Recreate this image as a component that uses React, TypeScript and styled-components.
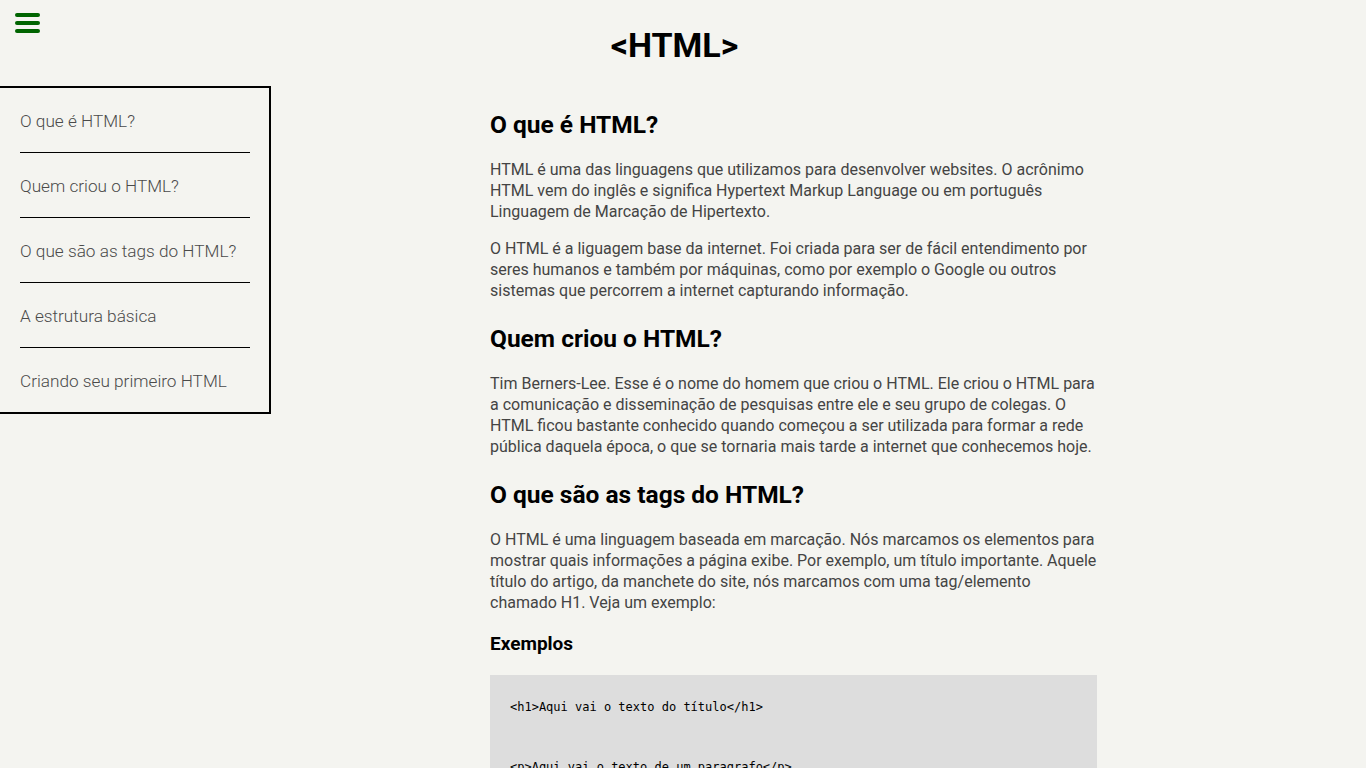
import React from "react";
import styled, { createGlobalStyle } from "styled-components";

const GlobalStyle = createGlobalStyle`
  html, body {
    margin: 0;
    padding: 0;
  }
  body {
    background: #f4f4f0;
    font-family: Roboto, "Open Sans", sans-serif;
    line-height: 1.33;
    color: #000;
  }
`;

const Header = styled.header`
  display: grid;
  grid-template-columns: 1fr auto 1fr;
  align-items: start;
  padding: 0 17px 20px 0;
`;

const MenuButton = styled.button`
  justify-self: start;
  display: flex;
  flex-direction: column;
  gap: 4px;
  background: none;
  border: 0;
  padding: 13px 15px;
  margin: 0;
  cursor: pointer;
`;

const Bar = styled.span`
  display: block;
  width: 25px;
  height: 4px;
  border-radius: 2px;
  background: #006400;
`;

const Title = styled.h1`
  margin: 24px 0 0;
  font-size: 34px;
  font-weight: 700;
  line-height: 42.5px;
  color: #000;
`;

const SideMenu = styled.nav`
  position: absolute;
  top: 86px;
  left: 0;
  width: 230px;
  padding: 0 19px 0 20px;
  border: 2px solid #000;
  border-left: none;
  background: #f4f4f0;
`;

const MenuItem = styled.a`
  display: flex;
  align-items: center;
  height: 62px;
  padding-top: 2px;
  border-bottom: 1px solid #000;
  font-size: 17.2px;
  font-weight: 300;
  color: #4a4a4a;
  text-decoration: none;
  &:last-child {
    border-bottom: none;
  }
`;

const Main = styled.main`
  width: 607px;
  margin-left: 490px;
  padding-bottom: 40px;
`;

const H2 = styled.h2`
  font-size: 24.5px;
  font-weight: 700;
  line-height: 32px;
  margin: 22px 0 18px;
`;

const H3 = styled.h3`
  font-size: 19px;
  font-weight: 700;
  line-height: 25px;
  margin: 18.72px 0;
`;

const P = styled.p`
  font-size: 16px;
  line-height: 21px;
  color: #444;
  margin: 16px 0;
`;

const CodeBlock = styled.pre`
  background: #dddddd;
  margin: 0;
  padding: 25px 20px 30px;
  font-family: "DejaVu Sans Mono", "Liberation Mono", monospace;
  font-size: 12px;
  line-height: 15px;
  color: #000;
  white-space: pre-wrap;
  display: flex;
  flex-direction: column;
  gap: 45px;
`;

const CodeLine = styled.code`
  display: block;
  font-family: inherit;
`;

const menu = [
  "O que é HTML?",
  "Quem criou o HTML?",
  "O que são as tags do HTML?",
  "A estrutura básica",
  "Criando seu primeiro HTML",
];

const codeLines = [
  "<h1>Aqui vai o texto do título</h1>",
  "<p>Aqui vai o texto de um paragrafo</p>",
  "<a href=\"https://www.google.com\">Link para o Google</a>",
];

const structureLines = [
  "<!DOCTYPE html>",
  "<html>",
  "<head>",
  "<title>Título da página</title>",
  "</head>",
  "<body>",
  "<h1>Meu primeiro título</h1>",
  "</body>",
  "</html>",
];

export default function App() {
  return (
    <>
      <GlobalStyle />
      <Header>
        <MenuButton aria-label="menu">
          <Bar />
          <Bar />
          <Bar />
        </MenuButton>
        <Title>&lt;HTML&gt;</Title>
      </Header>
      <SideMenu>
        {menu.map((m) => (
          <MenuItem key={m} href="#">
            {m}
          </MenuItem>
        ))}
      </SideMenu>
      <Main>
        <H2>O que é HTML?</H2>
        <P>
          HTML é uma das linguagens que utilizamos para desenvolver websites. O acrônimo
          HTML vem do inglês e significa Hypertext Markup Language ou em português
          Linguagem de Marcação de Hipertexto.
        </P>
        <P>
          O HTML é a liguagem base da internet. Foi criada para ser de fácil entendimento por
          seres humanos e também por máquinas, como por exemplo o Google ou outros
          sistemas que percorrem a internet capturando informação.
        </P>
        <H2>Quem criou o HTML?</H2>
        <P>
          Tim Berners-Lee. Esse é o nome do homem que criou o HTML. Ele criou o HTML para
          a comunicação e disseminação de pesquisas entre ele e seu grupo de colegas. O
          HTML ficou bastante conhecido quando começou a ser utilizada para formar a rede
          pública daquela época, o que se tornaria mais tarde a internet que conhecemos hoje.
        </P>
        <H2>O que são as tags do HTML?</H2>
        <P>
          O HTML é uma linguagem baseada em marcação. Nós marcamos os elementos para
          mostrar quais informações a página exibe. Por exemplo, um título importante. Aquele
          título do artigo, da manchete do site, nós marcamos com uma tag/elemento
          chamado H1. Veja um exemplo:
        </P>
        <H3>Exemplos</H3>
        <CodeBlock>
          {codeLines.map((l) => (
            <CodeLine key={l}>{l}</CodeLine>
          ))}
        </CodeBlock>
        <P>
          Perceba que as tags possuem uma abertura e um fechamento. Tudo o que estiver
          entre a abertura e o fechamento da tag será marcado por ela. Existem também
          algumas tags que não precisam de fechamento, como a tag de imagem e a tag de
          quebra de linha.
        </P>
        <H2>A estrutura básica</H2>
        <P>
          Todo documento HTML possui uma estrutura básica. Ela é composta pela declaração
          do tipo de documento, pela tag html, pelo cabeçalho (head) e pelo corpo (body) da
          página. No cabeçalho ficam as informações sobre a página, como o título, e no
          corpo fica todo o conteúdo que será exibido para o usuário.
        </P>
        <H3>Exemplo</H3>
        <CodeBlock>
          {structureLines.map((l) => (
            <CodeLine key={l}>{l}</CodeLine>
          ))}
        </CodeBlock>
        <H2>Criando seu primeiro HTML</H2>
        <P>
          Para criar o seu primeiro HTML basta abrir um editor de texto, como o Bloco de
          Notas ou o VS Code, escrever a estrutura básica mostrada acima e salvar o arquivo
          com a extensão .html. Depois é só abrir o arquivo no seu navegador preferido.
        </P>
        <P>
          Pronto! Você acabou de criar a sua primeira página na internet. Agora é só
          continuar estudando e adicionar novos elementos para deixar a sua página cada
          vez mais completa.
        </P>
      </Main>
    </>
  );
}
